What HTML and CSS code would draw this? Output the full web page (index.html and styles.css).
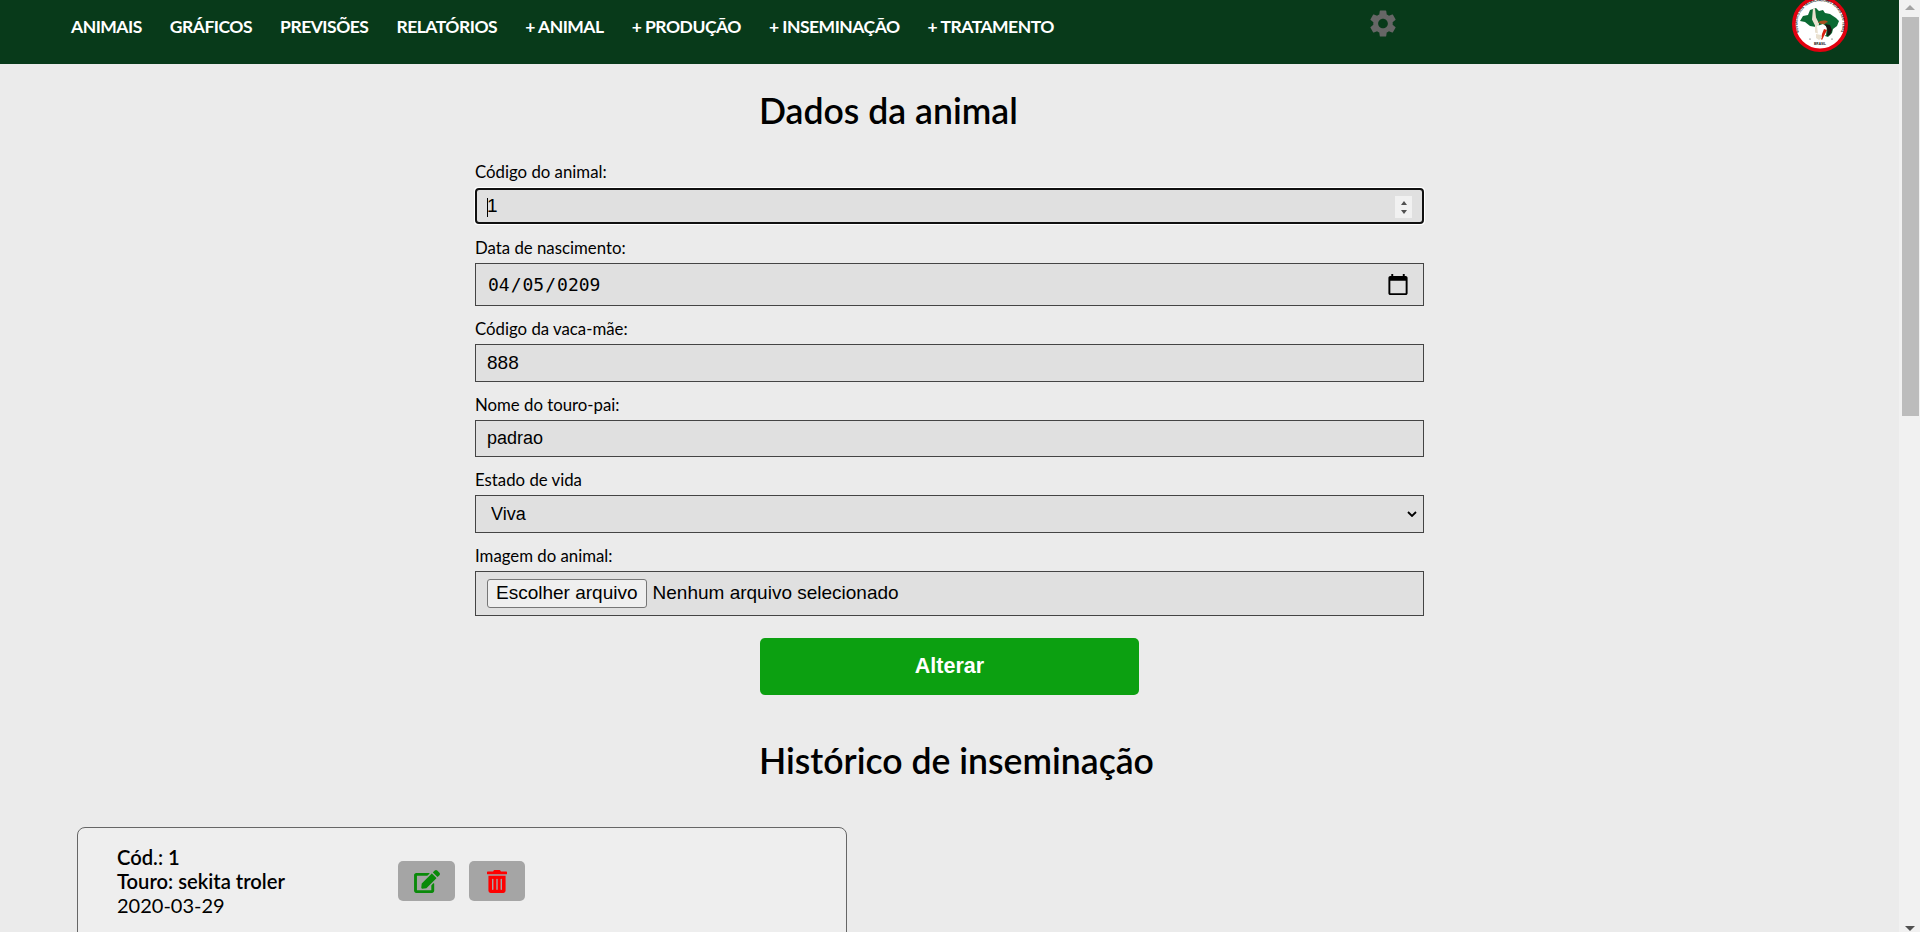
FILE: index.html
```html
<!DOCTYPE html>
<html lang="pt-BR">
<head>
<meta charset="utf-8">
<title>Dados da animal</title>
<link rel="stylesheet" href="styles.css">
</head>
<body>
<div class="page">
  <header class="topbar">
    <nav class="menu">
      <a href="#">ANIMAIS</a>
      <a href="#">GRÁFICOS</a>
      <a href="#">PREVISÕES</a>
      <a href="#">RELATÓRIOS</a>
      <a href="#">+ ANIMAL</a>
      <a href="#">+ PRODUÇÃO</a>
      <a href="#">+ INSEMINAÇÃO</a>
      <a href="#">+ TRATAMENTO</a>
    </nav>
    <svg class="gear" viewBox="2.6 2 18.8 20"><path fill="#666" d="M19.14 12.94c.04-.3.06-.61.06-.94 0-.32-.02-.64-.07-.94l2.03-1.58c.18-.14.23-.41.12-.61l-1.92-3.32c-.12-.22-.37-.29-.59-.22l-2.39.96c-.5-.38-1.03-.7-1.62-.94l-.36-2.54c-.04-.24-.24-.41-.48-.41h-3.84c-.24 0-.43.17-.47.41l-.36 2.54c-.59.24-1.13.57-1.62.94l-2.39-.96c-.22-.08-.47 0-.59.22L2.74 8.87c-.12.21-.08.47.12.61l2.03 1.58c-.05.3-.09.63-.09.94s.02.64.07.94l-2.03 1.58c-.18.14-.23.41-.12.61l1.92 3.32c.12.22.37.29.59.22l2.39-.96c.5.38 1.03.7 1.62.94l.36 2.54c.05.24.24.41.48.41h3.84c.24 0 .44-.17.47-.41l.36-2.54c.59-.24 1.13-.56 1.62-.94l2.39.96c.22.08.47 0 .59-.22l1.92-3.32c.12-.22.07-.47-.12-.61l-2.01-1.58zM12 15.6c-1.98 0-3.6-1.62-3.6-3.6s1.62-3.6 3.6-3.6 3.6 1.62 3.6 3.6-1.62 3.6-3.6 3.6z"/></svg>
    <svg class="logo" viewBox="0 0 56 56">
      <defs><path id="ring-text" d="M7.500 37 A22.500 22.500 0 1 1 48.500 37"/></defs>
      <circle cx="28" cy="28" r="26.200" fill="#fff" stroke="#e2000f" stroke-width="3.600"/>
      <text class="logo-ring"><textPath href="#ring-text" startOffset="50%" text-anchor="middle">MOVIMENTO DOS TRABALHADORES RURAIS SEM TERRA</textPath></text>
      <path fill="#0b6a33" d="M8 25l3-5 5-1 2-5 6-2 3 3 4-1 2 3 5 1 6 4 3 3-2 5-4 3-1 4-4 4-3-1-4-5-5-4-6-1-5-4z"/>
      <path fill="#e9e0cf" d="M21 12l2 .5 1 9 3 6-1 10-3-1 0-7-3-6z"/>
      <path fill="#fff" d="M25 30l6-2 4 3-1 8-5 3-3-4z"/>
      <path fill="#a9501f" d="M26 26.500c2-2 8-3 10-.5l-2 .8-1.500 1.500-3.500-.5z"/>
      <path fill="#1c1510" d="M33 28l5 1 2 5-2 5-3 1 .5-6z"/>
      <path fill="#d8200f" d="M32 33l3 1-3 6-2 4-1-1 1-5z"/>
      <path fill="#e9e0cf" d="M24 38l5 1 1 3-3 2-3-2z"/>
      <circle cx="18" cy="43" r=".6" fill="#222"/>
      <circle cx="40" cy="43" r=".6" fill="#222"/>
      <text class="logo-country" x="28" y="49" text-anchor="middle">BRASIL</text>
    </svg>
  </header>

  <main class="content">
    <h1 class="section-title">Dados da animal</h1>
    <form class="animal-form">
      <label class="field-label" for="codigo">Código do animal:</label>
      <div class="number-wrap">
        <input class="control control-number" id="codigo" type="number" value="1" autofocus>
        <span class="caret"></span>
        <span class="spin"><i class="spin-up"></i><i class="spin-down"></i></span>
      </div>

      <label class="field-label" for="nascimento">Data de nascimento:</label>
      <input class="control control-date" id="nascimento" type="date" value="0209-04-05">

      <label class="field-label" for="mae">Código da vaca-mãe:</label>
      <input class="control control-code" id="mae" type="text" value="888">

      <label class="field-label" for="pai">Nome do touro-pai:</label>
      <input class="control control-short" id="pai" type="text" value="padrao">

      <label class="field-label" for="estado">Estado de vida</label>
      <div class="select-wrap">
        <select class="control control-select" id="estado">
          <option>Viva</option>
          <option>Morta</option>
        </select>
        <svg class="chevron" viewBox="0 0 10 6"><path fill="none" stroke="#000" stroke-width="1.800" d="M1 1l4 4 4-4"/></svg>
      </div>

      <span class="field-label">Imagem do animal:</span>
      <div class="control control-file">
        <button class="file-button" type="button">Escolher arquivo</button>
        <span class="file-name">Nenhum arquivo selecionado</span>
      </div>

      <button class="submit" type="button">Alterar</button>
    </form>

    <h1 class="section-title history-title">Histórico de inseminação</h1>

    <article class="card">
      <div class="card-text">
        <strong>Cód.: 1</strong>
        <strong>Touro: sekita troler</strong>
        <span>2020-03-29</span>
      </div>
      <div class="card-actions">
        <button class="icon-button icon-edit" type="button" aria-label="Editar">
          <svg viewBox="0 0 576 512"><path fill="#0a8a0a" d="M402.6 83.2l90.2 90.2c3.800 3.800 3.800 10 0 13.800L274.400 405.600l-92.800 10.300c-12.400 1.400-22.900-9.100-21.500-21.500l10.300-92.800L388.800 83.200c3.800-3.800 10-3.800 13.800 0zm162-22.900l-48.800-48.800c-15.200-15.200-39.900-15.200-55.200 0l-35.400 35.400c-3.800 3.800-3.800 10 0 13.800l90.200 90.200c3.800 3.800 10 3.800 13.800 0l35.400-35.400c15.200-15.300 15.200-40 0-55.200zM384 346.200V448H64V128h229.800c3.200 0 6.200-1.300 8.500-3.500l40-40c7.600-7.600 2.200-20.500-8.500-20.500H48C21.500 64 0 85.500 0 112v352c0 26.500 21.500 48 48 48h352c26.500 0 48-21.500 48-48V306.200c0-10.700-12.900-16-20.500-8.500l-40 40c-2.200 2.300-3.500 5.300-3.500 8.500z"/></svg>
        </button>
        <button class="icon-button icon-delete" type="button" aria-label="Excluir">
          <svg viewBox="0 0 448 512"><path fill="#f00" d="M32 464a48 48 0 0 0 48 48h288a48 48 0 0 0 48-48V128H32zm272-256a16 16 0 0 1 32 0v224a16 16 0 0 1-32 0zm-96 0a16 16 0 0 1 32 0v224a16 16 0 0 1-32 0zm-96 0a16 16 0 0 1 32 0v224a16 16 0 0 1-32 0zM432 32H312l-9.400-18.700A24 24 0 0 0 281.100 0H166.800a23.720 23.720 0 0 0-21.400 13.300L136 32H16A16 16 0 0 0 0 48v32a16 16 0 0 0 16 16h416a16 16 0 0 0 16-16V48a16 16 0 0 0-16-16z"/></svg>
        </button>
      </div>
    </article>
  </main>
</div>
<aside class="scrollbar" aria-hidden="true">
  <span class="arrow arrow-up"></span>
  <span class="thumb"></span>
  <span class="arrow arrow-down"></span>
</aside>
</body>
</html>
```

FILE: styles.css
```css
* { box-sizing: border-box; }

html, body { height: 932px; overflow: hidden; }

body {
  margin: 0;
  display: flex;
  background: #ebebeb;
  color: #000;
  font-family: Lato, "Liberation Sans", sans-serif;
}

.page {
  width: 1899px;
  height: 932px;
  overflow: hidden;
  flex: none;
}

.topbar {
  height: 64px;
  background: #083a1a;
  display: flex;
  align-items: flex-start;
  overflow: hidden;
}

.menu {
  width: 1370px;
  flex: none;
  display: flex;
  gap: 28px;
  padding: 16px 0 0 71px;
}

.menu a {
  color: #fff;
  font-size: 17.500px;
  font-weight: 700;
  letter-spacing: -.5px;
  line-height: 22px;
  text-decoration: none;
  white-space: nowrap;
}

.gear {
  width: 26px;
  height: 27px;
  margin-top: 10px;
  flex: none;
}

.logo {
  width: 56px;
  height: 56px;
  margin: -4px 0 0 396px;
  flex: none;
}

.logo-ring {
  font-family: "Liberation Sans", sans-serif;
  font-size: 3.100px;
  font-weight: 700;
  fill: #111;
}

.logo-country {
  font-family: "Liberation Sans", sans-serif;
  font-size: 3.200px;
  font-weight: 700;
  fill: #111;
}

.content { display: flow-root; }

.section-title {
  margin: 24px 0 0 759px;
  font-size: 35.600px;
  font-weight: 600;
  line-height: 46px;
}

.animal-form {
  width: 949px;
  margin: 28px 0 0 475px;
  display: flex;
  flex-direction: column;
}

.field-label {
  display: block;
  height: 38px;
  padding-top: 12.500px;
  font-size: 16.800px;
  line-height: 20px;
}

.animal-form .field-label:first-child {
  height: 26px;
  padding-top: 0;
}

.control {
  display: block;
  width: 100%;
  height: 38px;
  margin: 0;
  padding: 0 11px;
  background: #e0e0e0;
  border: 1px solid #444;
  border-radius: 0;
  color: #000;
  font-family: "Liberation Sans", sans-serif;
  font-size: 18px;
}

.number-wrap {
  position: relative;
  height: 36px;
  margin-bottom: 1px;
}

.control-number {
  height: 36px;
  border-radius: 3px;
  font-size: 19px;
  caret-color: transparent;
  appearance: textfield;
}

.control-number::-webkit-inner-spin-button,
.control-number::-webkit-outer-spin-button {
  appearance: none;
  margin: 0;
}

.caret {
  position: absolute;
  left: 12px;
  top: 10px;
  width: 1px;
  height: 19px;
  background: #000;
}

.spin {
  position: absolute;
  right: 12px;
  top: 8px;
  width: 17px;
  height: 22px;
  background: #f1f1f1;
  display: flex;
  flex-direction: column;
  align-items: center;
  justify-content: center;
  gap: 5px;
}

.spin i {
  width: 0;
  height: 0;
  border-left: 3.500px solid transparent;
  border-right: 3.500px solid transparent;
}

.spin-up { border-bottom: 4px solid #505050; }
.spin-down { border-top: 4px solid #505050; }

.control-date {
  height: 43px;
  padding-right: 13px;
  font-family: "DejaVu Sans Mono", monospace;
  font-size: 18px;
}

.control-date::-webkit-calendar-picker-indicator {
  width: 24px;
  height: 24px;
  padding: 0;
  margin: 0;
}

.control-code { font-size: 19px; }
.control-short { height: 37px; }

.select-wrap { position: relative; }

.control-select {
  padding-left: 15px;
  appearance: none;
}

.chevron {
  position: absolute;
  right: 7px;
  top: 16px;
  width: 10px;
  height: 6px;
  pointer-events: none;
}

.control-file {
  height: 45px;
  display: flex;
  align-items: center;
  gap: 6px;
  font-size: 19px;
}

.file-button {
  height: 29px;
  padding: 0 8px 1px;
  background: #efefef;
  border: 1px solid #767676;
  border-radius: 3px;
  color: #000;
  font-family: "Liberation Sans", sans-serif;
  font-size: 19px;
}

.file-name {
  padding-bottom: 2px;
  white-space: nowrap;
}

.submit {
  align-self: flex-start;
  width: 379px;
  height: 57px;
  margin: 22px 0 0 285px;
  background: #0ca011;
  border: 0;
  border-radius: 5px;
  color: #fff;
  font-family: "Liberation Sans", sans-serif;
  font-size: 21.500px;
  font-weight: 700;
}

.history-title { margin-top: 43px; }

.card {
  width: 770px;
  height: 200px;
  margin: 43px 0 0 77px;
  padding: 17px 39px;
  background: #eee;
  border: 1px solid #666;
  border-radius: 8px;
  display: flex;
}

.card-text {
  width: 281px;
  flex: none;
  display: flex;
  flex-direction: column;
  font-size: 20px;
  line-height: 24px;
}

.card-text strong {
  font-size: 20.200px;
  font-weight: 600;
}

.card-actions {
  display: flex;
  gap: 14px;
  padding-top: 16px;
  align-items: flex-start;
}

.icon-button {
  height: 40px;
  padding: 0;
  background: #a5a5a5;
  border: 0;
  border-radius: 5px;
  display: flex;
  align-items: center;
  justify-content: center;
}

.icon-edit { width: 57px; }
.icon-delete { width: 56px; }
.icon-button svg { height: 23px; display: block; }
.icon-edit svg { width: 26px; }
.icon-delete svg { width: 20px; }

.scrollbar {
  width: 21px;
  height: 932px;
  flex: none;
  background: #f1f1f1;
  display: flex;
  flex-direction: column;
  align-items: center;
  padding: 0 0 0 1px;
}

.arrow {
  width: 0;
  height: 0;
  border-left: 5px solid transparent;
  border-right: 5px solid transparent;
  flex: none;
}

.arrow-up {
  margin-top: 5px;
  border-bottom: 5px solid #a3a3a3;
}

.thumb {
  width: 17px;
  height: 399px;
  margin-top: 7px;
  background: #bcbcbc;
  flex: none;
}

.arrow-down {
  margin-top: auto;
  margin-bottom: 1px;
  border-top: 5px solid #505050;
}
```
